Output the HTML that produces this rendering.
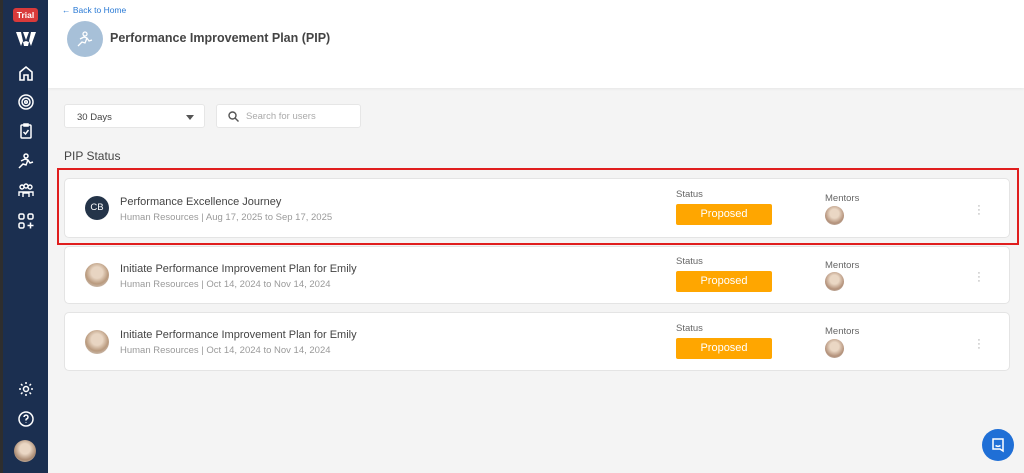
<!DOCTYPE html><html><head><style>
*{box-sizing:border-box;margin:0;padding:0}
body{width:1024px;height:473px;overflow:hidden;background:#f4f4f4;font-family:"Liberation Sans",sans-serif;position:relative}
.sb{position:absolute;left:0;top:0;width:48px;height:473px;background:#1b2f50;border-left:3px solid #2e2e2e}
.ic{position:absolute;left:14px;width:18px;height:18px}
.hdr{position:absolute;left:48px;top:0;right:0;height:88px;background:#fff;box-shadow:0 1px 3px rgba(0,0,0,.06)}
.card{position:absolute;left:64px;width:946px;background:#fff;border:1px solid #e4e4e4;border-radius:5px}
.av{position:absolute;left:20px;top:50%;margin-top:-12px;width:24px;height:24px;border-radius:50%;background:radial-gradient(circle at 50% 40%,#e8d5c2 0 30%,#b99a7e 60%,#ddd 100%)}
.t{position:absolute;left:55px;font-size:11px;color:#444}
.s{position:absolute;left:55px;font-size:9.5px;color:#9a9a9a}
.lab{position:absolute;left:611px;font-size:9.5px;color:#666}
.btn{position:absolute;left:611px;width:96px;height:21px;background:#ffa600;color:#fff;font-size:11px;text-align:center;line-height:21px;border-radius:2px}
.ml{position:absolute;left:760px;font-size:9.5px;color:#666}
.ma{position:absolute;left:760px;width:19px;height:19px;border-radius:50%;background:radial-gradient(circle at 50% 40%,#ead7c4 0 30%,#b3917a 65%,#ccc 100%)}
.k{position:absolute;left:912px;font-size:11px;color:#999;line-height:4px;width:4px;text-align:center}
</style></head><body>
<div class="sb">
<div style="position:absolute;left:10px;top:8px;width:25px;height:14px;background:#d93a3a;border-radius:3px;color:#fff;font-size:8.5px;font-weight:bold;text-align:center;line-height:14px">Trial</div>
<svg style="position:absolute;left:13px;top:32px" width="20" height="14" viewBox="0 0 20 14" fill="#fff"><path d="M0 0h5l2 9-2 5zM7 0h6l-3 8zM15 0h5l-5 14-2-5zM7 10l3-1 3 1-1 4h-4z"/></svg>
<svg class="ic" style="top:64px" viewBox="0 0 18 18" fill="none" stroke="#fff" stroke-width="1.6"><path d="M3 8l6-5 6 5v8h-4v-5H7v5H3z"/></svg>
<svg class="ic" style="top:93px" viewBox="0 0 18 18" fill="none" stroke="#fff" stroke-width="1.5"><circle cx="9" cy="9" r="7"/><circle cx="9" cy="9" r="4"/><circle cx="9" cy="9" r="1.3"/></svg>
<svg class="ic" style="top:122px" viewBox="0 0 18 18" fill="none" stroke="#fff" stroke-width="1.5"><rect x="4" y="3" width="10" height="13" rx="1"/><path d="M7 2h4v2H7zM6.5 10l2 2 3-4"/></svg>
<svg class="ic" style="top:152px" viewBox="0 0 18 18" fill="none" stroke="#fff" stroke-width="1.5"><circle cx="9" cy="4" r="2"/><path d="M2 16l4-4 3 1 2-5M4 9l4-2 3 1 2 3 3-1"/></svg>
<svg class="ic" style="top:182px" viewBox="0 0 18 18" fill="none" stroke="#fff" stroke-width="1.4"><circle cx="5" cy="5" r="2"/><circle cx="9" cy="4" r="2"/><circle cx="13" cy="5" r="2"/><path d="M2 14v-4h14v4M6 15v-4h6v4"/></svg>
<svg class="ic" style="top:212px" viewBox="0 0 18 18" fill="none" stroke="#fff" stroke-width="1.5"><rect x="2" y="2" width="5" height="5" rx="1.5"/><rect x="11" y="2" width="5" height="5" rx="1.5"/><rect x="2" y="11" width="5" height="5" rx="1.5"/><path d="M13.5 10.5v6M10.5 13.5h6"/></svg>
<svg class="ic" style="top:380px" viewBox="0 0 18 18" fill="none" stroke="#fff" stroke-width="1.5"><circle cx="9" cy="9" r="2.5"/><path d="M9 2v2M9 14v2M2 9h2M14 9h2M4 4l1.5 1.5M12.5 12.5L14 14M4 14l1.5-1.5M12.5 5.5L14 4"/></svg>
<svg class="ic" style="top:410px" viewBox="0 0 18 18" fill="none" stroke="#fff" stroke-width="1.5"><circle cx="9" cy="9" r="7"/><path d="M7 7a2 2 0 1 1 2.5 2c-.5.2-.5.8-.5 1.5M9 12.5v.5"/></svg>
<div style="position:absolute;left:11px;top:440px;width:22px;height:22px;border-radius:50%;background:radial-gradient(circle at 50% 40%,#ead7c4 0 30%,#a98a72 65%,#ddd 100%)"></div>
</div>
<div class="hdr">
<div style="position:absolute;left:14px;top:5px;font-size:8.5px;color:#2a7ad5">← Back to Home</div>
<div style="position:absolute;left:19px;top:21px;width:36px;height:36px;border-radius:50%;background:#a7c0d8"></div>
<svg style="position:absolute;left:28px;top:30px" width="18" height="18" viewBox="0 0 18 18" fill="none" stroke="#fff" stroke-width="1.3"><circle cx="9" cy="4" r="2"/><path d="M2 16l4-4 3 1 2-5M4 9l4-2 3 1 2 3 3-1"/></svg>
<div style="position:absolute;left:62px;top:31px;font-size:12.5px;font-weight:bold;color:#444">Performance Improvement Plan (PIP)</div>
</div>
<div style="position:absolute;left:64px;top:104px;width:141px;height:24px;background:#fff;border:1px solid #e6e6e6;border-radius:3px;font-size:9.5px;color:#444;padding:7px 12px">30 Days<span style="position:absolute;right:10px;top:10px;border:4px solid transparent;border-top:5px solid #555"></span></div>
<div style="position:absolute;left:216px;top:104px;width:145px;height:24px;background:#fff;border:1px solid #e6e6e6;border-radius:3px;font-size:9.5px;color:#aaa;padding:6px 0 0 29px">Search for users
<svg style="position:absolute;left:11px;top:6px" width="11" height="11" viewBox="0 0 11 11" fill="none" stroke="#555" stroke-width="1.4"><circle cx="4.5" cy="4.5" r="3.5"/><path d="M7 7l3.5 3.5"/></svg></div>
<div style="position:absolute;left:64px;top:149px;font-size:12px;color:#444">PIP Status</div>
<div style="position:absolute;left:57px;top:168px;width:962px;height:77px;border:2px solid #e01e1e"></div>
<div class="card" style="top:178px;height:60px">
<div class="av" style="background:#243449;color:#fff;font-size:9.5px;text-align:center;line-height:24px">CB</div>
<div class="t" style="top:17px">Performance Excellence Journey</div>
<div class="s" style="top:33px">Human Resources | Aug 17, 2025 to Sep 17, 2025</div>
<div class="lab" style="top:10px">Status</div><div class="btn" style="top:25px">Proposed</div>
<div class="ml" style="top:14px">Mentors</div><div class="ma" style="top:27px"></div>
<div class="k" style="top:25px">·<br>·<br>·</div>
</div>
<div class="card" style="top:246px;height:58px">
<div class="av"></div>
<div class="t" style="top:16px">Initiate Performance Improvement Plan for Emily</div>
<div class="s" style="top:32px">Human Resources | Oct 14, 2024 to Nov 14, 2024</div>
<div class="lab" style="top:9px">Status</div><div class="btn" style="top:24px">Proposed</div>
<div class="ml" style="top:13px">Mentors</div><div class="ma" style="top:25px"></div>
<div class="k" style="top:24px">·<br>·<br>·</div>
</div>
<div class="card" style="top:312px;height:59px">
<div class="av"></div>
<div class="t" style="top:16px">Initiate Performance Improvement Plan for Emily</div>
<div class="s" style="top:32px">Human Resources | Oct 14, 2024 to Nov 14, 2024</div>
<div class="lab" style="top:10px">Status</div><div class="btn" style="top:25px">Proposed</div>
<div class="ml" style="top:13px">Mentors</div><div class="ma" style="top:26px"></div>
<div class="k" style="top:25px">·<br>·<br>·</div>
</div>
<div style="position:absolute;left:982px;top:429px;width:32px;height:32px;border-radius:50%;background:#1f6fd6"></div>
<svg style="position:absolute;left:990px;top:437px" width="16" height="16" viewBox="0 0 16 16" fill="none" stroke="#fff" stroke-width="1.5"><path d="M3 2h10v12l-3-2H3z"/><path d="M5.5 8.5c1.5 1 3.5 1 5 0"/></svg>
</body></html>
